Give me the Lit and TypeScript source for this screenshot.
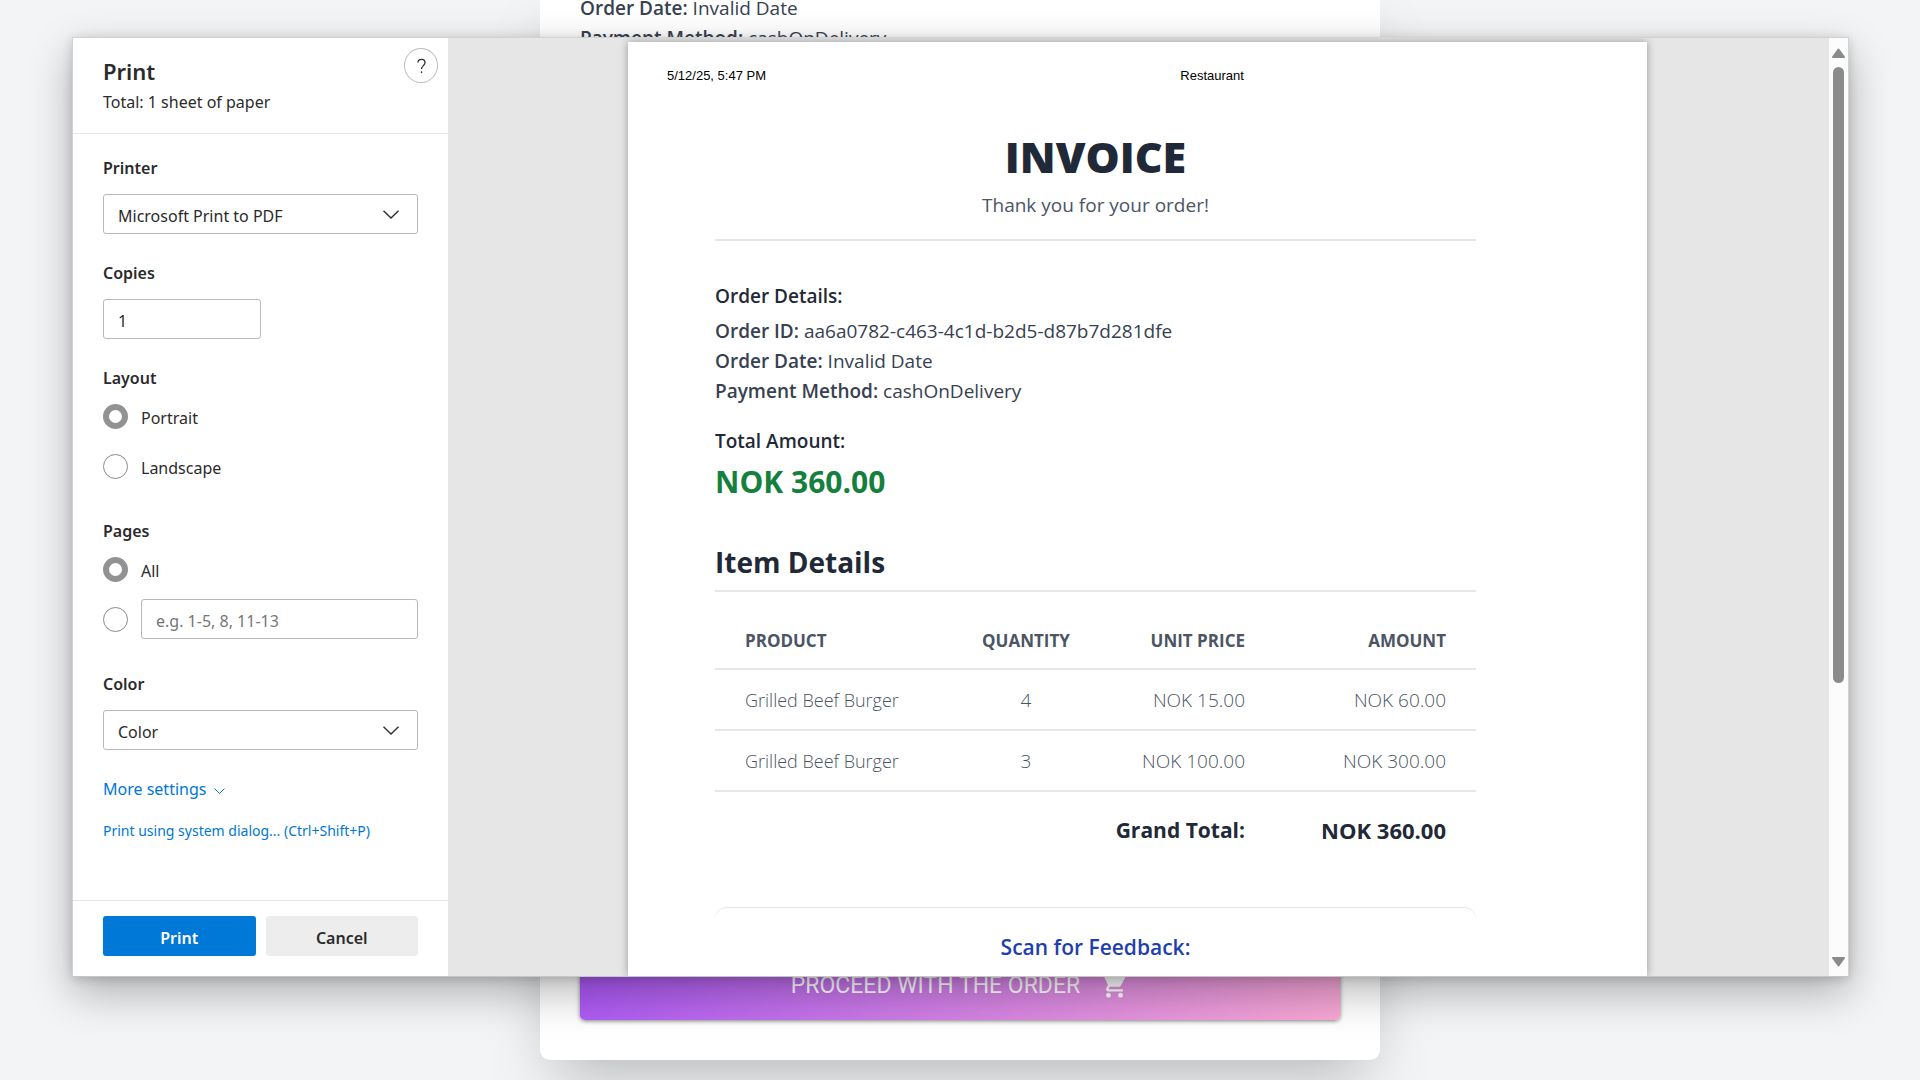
import { LitElement, html, css } from "lit";
import { customElement, property } from "lit/decorators.js";

interface Line {
  product: string;
  quantity: number;
  unit: number;
}

const lines: Line[] = [
  { product: "Grilled Beef Burger", quantity: 4, unit: 15 },
  { product: "Grilled Beef Burger", quantity: 3, unit: 100 },
];

const nok = (value: number) => `NOK ${value.toFixed(2)}`;

/** Checkout page that lies behind the print dialog. */
@customElement("checkout-page")
export class CheckoutPage extends LitElement {
  static styles = css`
    :host {
      display: flex;
      flex-direction: column;
      align-items: center;
      box-sizing: border-box;
      height: 100vh;
      padding: 0 20px 20px;
      overflow: hidden;
      background: #f3f4f6;
      color: #374151;
      font-family: "Open Sans", sans-serif;
    }
    .card {
      flex: 1;
      display: flex;
      flex-direction: column;
      justify-content: space-between;
      box-sizing: border-box;
      width: 100%;
      max-width: 840px;
      margin-top: -7px;
      padding: 0 40px 40px;
      border-radius: 0 0 10px 10px;
      background: #fff;
      box-shadow: 0 30px 60px -15px rgba(0, 0, 0, 0.25);
    }
    .line {
      margin: 0;
      font-size: 19px;
      line-height: 30px;
    }
    .line strong {
      font-weight: 600;
    }
    .proceed {
      display: flex;
      align-items: center;
      justify-content: center;
      gap: 20px;
      width: 100%;
      height: 70px;
      padding: 0;
      border: 0;
      border-radius: 5px;
      background: linear-gradient(135deg, #a855f7, #f9a8d4);
      box-shadow: 0 1px 4px rgba(0, 0, 0, 0.5);
      color: #fff;
      font: 400 23px Roboto, sans-serif;
    }
    .proceed svg {
      width: 29px;
      height: 29px;
      fill: currentColor;
    }
  `;

  render() {
    return html`
      <main class="card">
        <div>
          <p class="line"><strong>Order Date:</strong> Invalid Date</p>
          <p class="line"><strong>Payment Method:</strong> cashOnDelivery</p>
        </div>
        <button class="proceed" type="button">
          <span>PROCEED WITH THE ORDER</span>
          <svg viewBox="0 0 24 24" aria-hidden="true">
            <path
              d="M7 18c-1.100 0-1.990.9-1.990 2S5.900 22 7 22s2-.9 2-2-.9-2-2-2zM1 2v2h2l3.600 7.590-1.350 2.450c-.16.28-.25.61-.25.96 0 1.100.9 2 2 2h12v-2H7.420c-.14 0-.25-.11-.25-.25l.03-.12.9-1.630h7.450c.75 0 1.410-.41 1.750-1.030l3.580-6.490A1 1 0 0 0 20 4H5.210l-.94-2H1zm16 16c-1.100 0-1.990.9-1.990 2s.89 2 1.990 2 2-.9 2-2-.9-2-2-2z"
            />
          </svg>
        </button>
      </main>
    `;
  }
}

/** Column of print options on the left of the dialog. */
@customElement("print-settings")
export class PrintSettings extends LitElement {
  static styles = css`
    :host {
      display: flex;
      flex-direction: column;
      background: #fff;
      color: #2b2b2b;
      font: 400 16px/24px "Noto Sans", "Open Sans", sans-serif;
    }
    .head {
      position: relative;
      padding: 18px 30px 19px;
      border-bottom: 1px solid #e6e6e6;
    }
    .title {
      margin: 0 0 4px;
      font-size: 22px;
      font-weight: 600;
      line-height: 30px;
    }
    .total {
      margin: 0;
    }
    .help {
      position: absolute;
      top: 10px;
      right: 10px;
      display: grid;
      place-items: center;
      width: 34px;
      height: 35px;
      padding: 0;
      border: 1px solid #bdbdbd;
      border-radius: 50%;
      background: #fff;
      color: #333;
    }
    .help svg {
      width: 11px;
      height: 16px;
    }
    .form {
      flex: 1;
      min-height: 0;
      overflow: hidden;
      padding: 22px 30px 0;
    }
    .group {
      min-width: 0;
      margin: 0 0 27px;
      padding: 0;
      border: 0;
    }
    .choices {
      margin-bottom: 33px;
    }
    .label {
      display: block;
      margin-bottom: 14px;
      padding: 0;
      font-weight: 600;
    }
    .choices .label {
      margin-bottom: 6px;
    }
    .field {
      box-sizing: border-box;
      width: 100%;
      height: 40px;
      margin: 0;
      padding: 3px 14px 0;
      border: 1px solid #b8b8b8;
      border-radius: 3px;
      background: #fff;
      color: inherit;
      font: inherit;
      appearance: none;
      display: block;
    }
    .field::placeholder {
      color: #767676;
      opacity: 1;
    }
    .copies {
      width: 50%;
    }
    .picker {
      display: grid;
      align-items: center;
    }
    .picker > * {
      grid-area: 1 / 1;
    }
    .picker svg {
      justify-self: end;
      width: 16px;
      height: 9px;
      margin-right: 19px;
      pointer-events: none;
    }
    .row {
      display: flex;
      align-items: center;
      gap: 13px;
      height: 40px;
    }
    .row + .row {
      margin-top: 10px;
    }
    .row label {
      padding-top: 3px;
    }
    .radio {
      flex: none;
      box-sizing: border-box;
      width: 25px;
      height: 25px;
      margin: 0;
      border: 1px solid #8a8a8a;
      border-radius: 50%;
      background: #fff;
      appearance: none;
    }
    .radio:checked {
      border: 6px solid #929292;
    }
    .link {
      color: #0078d4;
      text-decoration: none;
    }
    .more {
      display: flex;
      align-items: center;
      gap: 8px;
      margin-bottom: 20px;
      padding: 0;
      border: 0;
      background: none;
      font: inherit;
    }
    .more svg {
      width: 11px;
      height: 7px;
      margin-top: 5px;
    }
    .system {
      display: block;
      font-size: 14px;
      line-height: 20px;
    }
    .foot {
      display: flex;
      gap: 10px;
      padding: 15px 30px 20px;
      border-top: 1px solid #e6e6e6;
    }
    .button {
      flex: 1;
      height: 40px;
      padding: 3px 0 0;
      border: 0;
      border-radius: 3px;
      background: #ededed;
      color: inherit;
      font: inherit;
      font-weight: 600;
    }
    .primary {
      background: #0078d7;
      color: #fff;
    }
  `;

  private chevron() {
    return html`<svg viewBox="0 0 16 9" fill="none" stroke="#333" stroke-width="1.500" aria-hidden="true">
      <path d="M.5.8 8 8 15.500.8" />
    </svg>`;
  }

  render() {
    return html`
      <header class="head">
        <h1 class="title">Print</h1>
        <p class="total">Total: 1 sheet of paper</p>
        <button class="help" type="button" aria-label="Help">
          <svg viewBox="0 0 12 18" fill="none" stroke="currentColor" stroke-width="1.500" aria-hidden="true">
            <path d="M2 5.200C2 2.900 3.600 1.600 6 1.600s4 1.300 4 3.600c0 3.300-4 3.500-4 7.300" />
            <path d="M6 15v2" />
          </svg>
        </button>
      </header>
      <div class="form">
        <div class="group">
          <label class="label" for="printer">Printer</label>
          <div class="picker">
            <select class="field" id="printer">
              <option>Microsoft Print to PDF</option>
            </select>
            ${this.chevron()}
          </div>
        </div>
        <div class="group">
          <label class="label" for="copies">Copies</label>
          <input class="field copies" id="copies" type="text" inputmode="numeric" value="1" />
        </div>
        <fieldset class="group choices">
          <legend class="label">Layout</legend>
          <div class="row">
            <input class="radio" type="radio" name="layout" id="portrait" checked />
            <label for="portrait">Portrait</label>
          </div>
          <div class="row">
            <input class="radio" type="radio" name="layout" id="landscape" />
            <label for="landscape">Landscape</label>
          </div>
        </fieldset>
        <fieldset class="group choices">
          <legend class="label">Pages</legend>
          <div class="row">
            <input class="radio" type="radio" name="pages" id="all" checked />
            <label for="all">All</label>
          </div>
          <div class="row">
            <input class="radio" type="radio" name="pages" id="custom" aria-label="Page range" />
            <input class="field" type="text" aria-label="Pages to print" placeholder="e.g. 1-5, 8, 11-13" />
          </div>
        </fieldset>
        <div class="group">
          <label class="label" for="color">Color</label>
          <div class="picker">
            <select class="field" id="color">
              <option>Color</option>
            </select>
            ${this.chevron()}
          </div>
        </div>
        <button class="link more" type="button">
          More settings
          <svg viewBox="0 0 11 7" fill="none" stroke="currentColor" aria-hidden="true">
            <path d="M.5.5l5 5 5-5" />
          </svg>
        </button>
        <a class="link system" href="#system">Print using system dialog... (Ctrl+Shift+P)</a>
      </div>
      <footer class="foot">
        <button class="button primary" type="button">Print</button>
        <button class="button" type="button">Cancel</button>
      </footer>
    `;
  }
}

/** The printed sheet. */
@customElement("invoice-sheet")
export class InvoiceSheet extends LitElement {
  @property({ attribute: false }) items: Line[] = [];

  static styles = css`
    :host {
      display: block;
      background: #fff;
      color: #1f2937;
      font: 400 19px/30px "Open Sans", sans-serif;
    }
    .running {
      display: grid;
      grid-template-columns: 6fr 5fr;
      padding: 26px 39px 47px;
      color: #000;
      font: 13px/16px "Liberation Sans", Arial, sans-serif;
    }
    .body {
      padding: 0 171px 0 87px;
    }
    .top {
      padding-bottom: 20px;
      border-bottom: 2px solid #e5e7eb;
      text-align: center;
    }
    .name {
      margin: 0 0 8px;
      font-size: 43px;
      font-weight: 800;
      line-height: 52px;
    }
    .thanks {
      margin: 0;
      color: #4b5563;
      line-height: 28px;
    }
    .details {
      margin: 40px 0;
    }
    .caption {
      margin: 20px 0 5px;
      font-size: inherit;
      font-weight: 600;
    }
    .detail {
      margin: 0;
      color: #374151;
    }
    .detail strong {
      font-weight: 600;
    }
    .amount {
      margin: 0;
      color: #15803d;
      font-size: 30px;
      font-weight: 700;
      line-height: 42px;
    }
    .section {
      margin: 0 0 20px;
      padding-bottom: 9px;
      border-bottom: 2px solid #e5e7eb;
      font-size: 28px;
      font-weight: 700;
      line-height: 38px;
    }
    .items {
      width: 100%;
      border-collapse: separate;
      border-spacing: 0;
      table-layout: fixed;
    }
    .items th,
    .items td {
      padding: 16px 30px 14px;
      text-align: right;
      white-space: nowrap;
    }
    .quantity {
      width: 150px;
    }
    .unit {
      width: 174px;
    }
    .sum {
      width: 201px;
    }
    .items .left {
      text-align: left;
    }
    .items .center {
      text-align: center;
    }
    .items thead th {
      padding-inline: 0;
      border-bottom: 2px solid #e5e7eb;
      color: #4b5563;
      font-size: 17px;
      font-weight: 700;
      line-height: 26px;
    }
    .items thead .left {
      padding-left: 30px;
    }
    .items thead .right {
      padding-right: 30px;
    }
    .items tbody td {
      border-bottom: 2px solid #e5e7eb;
      color: #4b5563;
      font-size: 19px;
      font-weight: 300;
      line-height: 29px;
    }
    .items tbody .left {
      font-size: 18px;
    }
    .items tfoot th,
    .items tfoot td {
      padding-block: 21px 19px;
      font-size: 21px;
      font-weight: 700;
      line-height: 35px;
    }
    .items tfoot td {
      font-size: 22px;
    }
    .feedback {
      margin-top: 40px;
      padding: 24px;
      border-top: 1px solid #e2e3e6;
      border-radius: 12px;
      text-align: center;
    }
    .scan {
      margin: 0;
      color: #1e40af;
      font-size: 21px;
      font-weight: 600;
    }
  `;

  render() {
    const total = this.items.reduce((sum, item) => sum + item.quantity * item.unit, 0);
    return html`
      <div class="running"><span>5/12/25, 5:47 PM</span><span>Restaurant</span></div>
      <div class="body">
        <header class="top">
          <h1 class="name">INVOICE</h1>
          <p class="thanks">Thank you for your order!</p>
        </header>
        <section class="details">
          <h3 class="caption">Order Details:</h3>
          <p class="detail"><strong>Order ID:</strong> aa6a0782-c463-4c1d-b2d5-d87b7d281dfe</p>
          <p class="detail"><strong>Order Date:</strong> Invalid Date</p>
          <p class="detail"><strong>Payment Method:</strong> cashOnDelivery</p>
          <h3 class="caption">Total Amount:</h3>
          <p class="amount">${nok(total)}</p>
        </section>
        <h2 class="section">Item Details</h2>
        <table class="items">
          <colgroup>
            <col />
            <col class="quantity" />
            <col class="unit" />
            <col class="sum" />
          </colgroup>
          <thead>
            <tr>
              <th class="left" scope="col">PRODUCT</th>
              <th class="center" scope="col">QUANTITY</th>
              <th class="right" scope="col">UNIT PRICE</th>
              <th class="right" scope="col">AMOUNT</th>
            </tr>
          </thead>
          <tbody>
            ${this.items.map(
              (item) => html`<tr>
                <td class="left">${item.product}</td>
                <td class="center">${item.quantity}</td>
                <td>${nok(item.unit)}</td>
                <td>${nok(item.quantity * item.unit)}</td>
              </tr>`
            )}
          </tbody>
          <tfoot>
            <tr>
              <th colspan="3" scope="row">Grand Total:</th>
              <td>${nok(total)}</td>
            </tr>
          </tfoot>
        </table>
        <section class="feedback">
          <h3 class="scan">Scan for Feedback:</h3>
        </section>
      </div>
    `;
  }
}

@customElement("app-root")
export class AppRoot extends LitElement {
  static styles = css`
    :host {
      display: block;
      position: relative;
      height: 100vh;
      overflow: hidden;
    }
    .overlay {
      position: absolute;
      inset: 0;
      display: flex;
      padding: 37px 71px 103px 72px;
    }
    .dialog {
      flex: 1;
      display: grid;
      grid-template-columns: 375px 1fr 19px;
      grid-template-rows: minmax(0, 1fr);
      border: 1px solid #d2d2d2;
      border-bottom-color: #c6c6c6;
      box-shadow: 0 16px 40px rgba(0, 0, 0, 0.28), 0 2px 10px rgba(0, 0, 0, 0.16);
    }
    .preview {
      display: flex;
      justify-content: center;
      overflow: hidden;
      padding: 4px 2px 0 0;
      background: #e6e6e6;
    }
    .sheet {
      width: 100%;
      max-width: 1019px;
      box-shadow: 0 0 8px rgba(0, 0, 0, 0.35);
    }
    .scrollbar {
      display: flex;
      flex-direction: column;
      align-items: center;
      background: #fcfcfc;
      color: #8b8b8b;
    }
    .scrollbar svg {
      width: 13px;
      height: 10px;
      padding: 10px 0 9px;
      fill: currentColor;
      stroke: currentColor;
      stroke-width: 2;
      stroke-linejoin: round;
    }
    .track {
      flex: 1;
    }
    .thumb {
      width: 11px;
      height: 70%;
      border-radius: 6px;
      background: currentColor;
    }
  `;

  render() {
    return html`
      <checkout-page></checkout-page>
      <div class="overlay">
        <div class="dialog" role="dialog" aria-label="Print">
          <print-settings></print-settings>
          <div class="preview">
            <invoice-sheet class="sheet" .items=${lines}></invoice-sheet>
          </div>
          <div class="scrollbar" aria-hidden="true">
            <svg viewBox="0 0 13 10"><path d="M6.500 1.500 12 9H1z" /></svg>
            <div class="track"><div class="thumb"></div></div>
            <svg viewBox="0 0 13 10"><path d="M6.500 8.500 12 1H1z" /></svg>
          </div>
        </div>
      </div>
    `;
  }
}
